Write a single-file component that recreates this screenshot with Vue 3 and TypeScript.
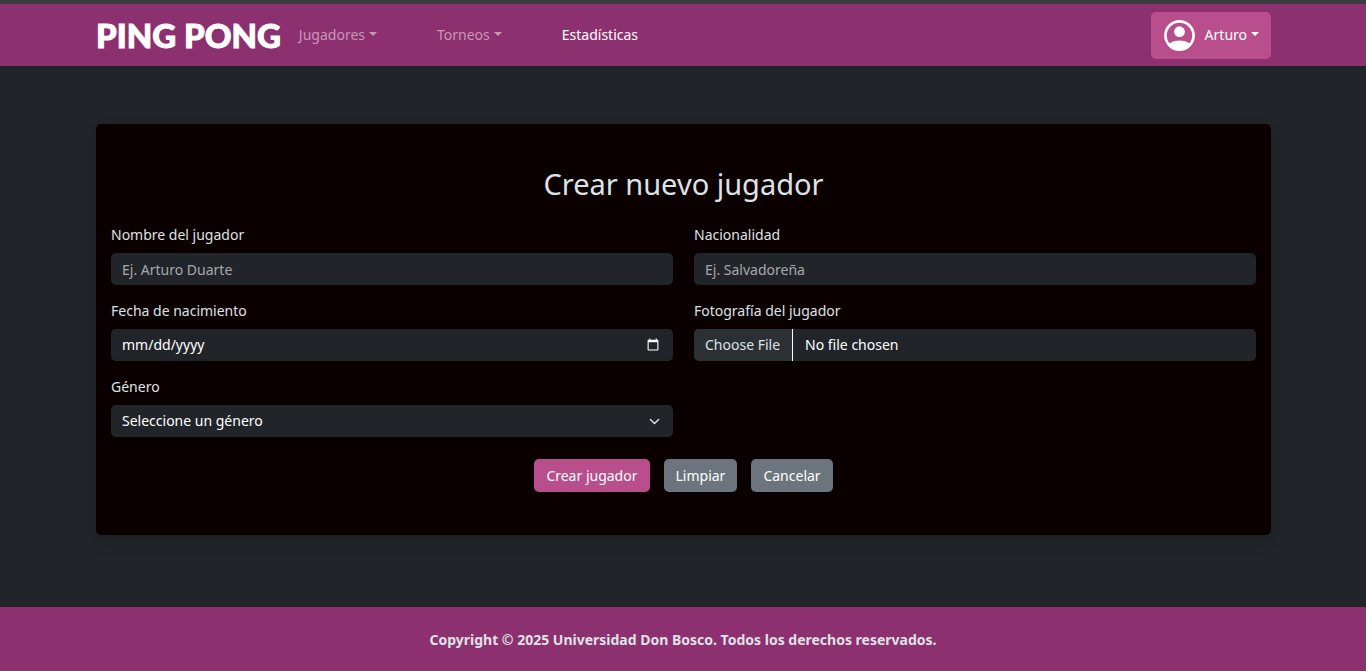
<script setup lang="ts">
import { ref } from 'vue'

interface NavItem {
  label: string
  menu: boolean
}

const navItems: NavItem[] = [
  { label: 'Jugadores', menu: true },
  { label: 'Torneos', menu: true },
  { label: 'Estadísticas', menu: false },
]

const nombre = ref('')
const nacionalidad = ref('')
const fecha = ref('')
const genero = ref('')

function limpiar(): void {
  nombre.value = ''
  nacionalidad.value = ''
  fecha.value = ''
  genero.value = ''
}
</script>

<template>
  <div class="page">
    <header class="topbar">
      <div class="topbar-inner">
        <a class="brand" href="#">PING PONG</a>
        <nav class="nav">
          <template v-for="item in navItems" :key="item.label">
            <button v-if="item.menu" type="button" class="nav-item caret">{{ item.label }}</button>
            <a v-else href="#" class="nav-item active">{{ item.label }}</a>
          </template>
        </nav>
        <button type="button" class="user">
          <svg class="avatar" viewBox="0 0 30 30" aria-hidden="true">
            <defs>
              <clipPath id="avatar-clip"><circle cx="15" cy="15" r="14" /></clipPath>
            </defs>
            <circle cx="15" cy="15" r="13.6" fill="none" stroke="#fff" stroke-width="2.6" />
            <circle cx="15" cy="11.3" r="5.2" fill="#fff" />
            <ellipse cx="15" cy="27.5" rx="12.5" ry="7.6" fill="#fff" clip-path="url(#avatar-clip)" />
          </svg>
          <span class="caret">Arturo</span>
        </button>
      </div>
    </header>

    <main class="main">
      <form class="card" @submit.prevent @reset="limpiar">
        <h1 class="title">Crear nuevo jugador</h1>
        <div class="fields">
          <div class="field">
            <label for="nombre">Nombre del jugador</label>
            <input id="nombre" v-model="nombre" class="control" type="text" placeholder="Ej. Arturo Duarte" />
          </div>
          <div class="field">
            <label for="nacionalidad">Nacionalidad</label>
            <input id="nacionalidad" v-model="nacionalidad" class="control" type="text" placeholder="Ej. Salvadoreña" />
          </div>
          <div class="field">
            <label for="fecha">Fecha de nacimiento</label>
            <input id="fecha" v-model="fecha" class="control date" type="date" />
          </div>
          <div class="field">
            <label for="foto">Fotografía del jugador</label>
            <input id="foto" class="control file" type="file" accept="image/*" />
          </div>
          <div class="field">
            <label for="genero">Género</label>
            <select id="genero" v-model="genero" class="control select">
              <option value="">Seleccione un género</option>
              <option value="M">Masculino</option>
              <option value="F">Femenino</option>
            </select>
          </div>
        </div>
        <div class="actions">
          <button type="submit" class="btn primary">Crear jugador</button>
          <button type="reset" class="btn">Limpiar</button>
          <button type="button" class="btn">Cancelar</button>
        </div>
      </form>
    </main>

    <footer class="footer">Copyright © 2025 Universidad Don Bosco. Todos los derechos reservados.</footer>
  </div>
</template>

<style>
body {
  margin: 0;
  background: #212529;
}
</style>

<style scoped>
.page {
  display: flex;
  flex-direction: column;
  min-height: 100vh;
  box-sizing: border-box;
  border-top: 4px solid #3b3b40;
  background: #212529;
  color: #dee2e6;
  color-scheme: dark;
  font: 14px/22px "Noto Sans", sans-serif;
}
.page *,
.page *::before,
.page *::after {
  box-sizing: border-box;
}
button,
input,
select {
  font: inherit;
}
button {
  border: 0;
  cursor: pointer;
}
.topbar,
.footer {
  background: #8d306f;
}
.topbar-inner {
  display: flex;
  align-items: center;
  height: 62px;
  margin: 0 95px 0 96px;
}
.brand {
  color: #fff;
  font: 900 33px/40px Lato, sans-serif;
  -webkit-text-stroke: 1px #fff;
  text-decoration: none;
  white-space: nowrap;
}
.nav {
  display: flex;
  gap: 60px;
  margin-left: 18px;
}
.nav-item {
  padding: 0;
  background: none;
  color: #c797b7;
  text-decoration: none;
}
.nav-item.active {
  color: #fff;
}
.caret::after {
  content: "";
  display: inline-block;
  margin-left: 4px;
  vertical-align: 4px;
  border: 4px solid transparent;
  border-top-color: currentColor;
  border-bottom: 0;
}
.user {
  display: flex;
  align-items: center;
  gap: 10px;
  height: 47px;
  margin-left: auto;
  padding: 0 12px 0 13px;
  border-radius: 5px;
  background: #b84e8b;
  color: #fff;
}
.avatar {
  width: 31px;
  height: 31px;
}
.main {
  flex: 1;
  padding: 58px 0 72px;
}
.card {
  margin: 0 95px 0 96px;
  padding: 42px 15px 43px;
  border-radius: 5px;
  background: #0a0000;
  box-shadow: 0 7px 14px rgba(0, 0, 0, 0.15);
}
.title {
  margin: 0 0 23px;
  font-size: 29px;
  font-weight: 400;
  line-height: 35px;
  text-align: center;
}
.fields {
  display: grid;
  grid-template-columns: 1fr 1fr;
  gap: 15px 21px;
}
.field {
  display: flex;
  flex-direction: column;
  gap: 7px;
}
.control {
  width: 100%;
  height: 32px;
  padding: 5px 11px;
  border: 0;
  border-radius: 5px;
  outline: 0;
  background: #212529;
  color: #fff;
}
.control::placeholder {
  color: #a6a8a9;
  opacity: 1;
}
.date::-webkit-datetime-edit-fields-wrapper,
.date::-webkit-datetime-edit-month-field,
.date::-webkit-datetime-edit-day-field,
.date::-webkit-datetime-edit-year-field {
  padding: 0;
}
.file {
  overflow: hidden;
  padding: 0;
  line-height: 32px;
}
.file::file-selector-button {
  height: 32px;
  margin: 0 12px 0 0;
  padding: 0 12px 0 11px;
  border: 0;
  border-right: 1px solid #fff;
  background: #2b3035;
  color: #dee2e6;
  font: inherit;
}
.select {
  appearance: none;
  background: #212529 url("data:image/svg+xml,%3Csvg xmlns='http://www.w3.org/2000/svg' viewBox='0 0 16 16'%3E%3Cpath fill='none' stroke='%23dee2e6' stroke-linecap='round' stroke-linejoin='round' stroke-width='2' d='m2 5 6 6 6-6'/%3E%3C/svg%3E") no-repeat right 13px center / 11px;
}
.actions {
  display: flex;
  justify-content: center;
  gap: 14px;
  margin-top: 22px;
}
.btn {
  height: 33px;
  padding: 0 12px;
  border-radius: 5px;
  background: #6c757d;
  color: #fff;
}
.btn.primary {
  background: #b84e8b;
}
.footer {
  padding: 22px 0 20px;
  font-weight: 700;
  text-align: center;
}
</style>
